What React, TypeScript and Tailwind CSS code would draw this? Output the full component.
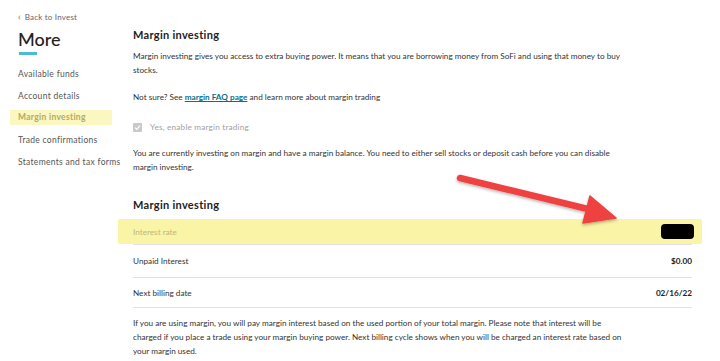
import React from "react"

const menu = ["Available funds", "Account details", "Margin investing", "Trade confirmations", "Statements and tax forms"]

const App: React.FC = () => {
    return (
        <div className="relative w-[720px] h-[361px] overflow-hidden bg-white text-[#333] font-['Lato','Liberation_Sans',sans-serif]">
            <div className="flex">
                {/* sidebar */}
                <div className="w-[125px] shrink-0 pl-[18px] pt-[11px]">
                    <div className="flex items-center gap-[4px] text-[8px] leading-[12px] text-[#666] tracking-[0.2px]">
                        <span className="text-[9px]">‹</span>
                        <span>Back to Invest</span>
                    </div>
                    <div className="mt-[8px] text-[18px] leading-[16px] font-medium text-[#222]">More</div>
                    <div className="mt-[5px] ml-[1px] w-[18px] h-[3px] bg-[#4dbcd0]"></div>
                    <div className="mt-[8px] flex flex-col">
                        {menu.map((item) => (
                            item === "Margin investing" ? (
                                <div key={item} className="-ml-[8px] w-[102px] h-[15px] pl-[8px] mt-[3px] mb-[4px] flex items-center bg-[#fbf7c0] text-[8.5px] tracking-[0.3px] font-bold text-[#b3ab62]">
                                    {item}
                                </div>
                            ) : (
                                <div key={item} className="h-[22px] flex items-center text-[8.5px] tracking-[0.3px] text-[#555]">
                                    {item}
                                </div>
                            )
                        ))}
                    </div>
                </div>

                {/* main */}
                <div className="w-[567px] pl-[8px] pt-[28px] text-[8.2px] leading-[14px]">
                    <div className="text-[11px] leading-[14px] font-bold tracking-[0.3px] text-[#222]">Margin investing</div>
                    <p className="mt-[7px] max-w-[490px]">
                        Margin investing gives you access to extra buying power. It means that you are borrowing money from SoFi and using that money to buy stocks.
                    </p>
                    <p className="mt-[13px]">
                        Not sure? See <span className="font-bold text-[#0a6f8a] underline">margin FAQ page</span> and learn more about margin trading
                    </p>
                    <div className="mt-[16px] flex items-center gap-[8px] text-[#a0a0a0]">
                        <div className="w-[9px] h-[9px] rounded-[1px] bg-[#c9c9c9] flex items-center justify-center">
                            <svg width="7" height="7" viewBox="0 0 10 10">
                                <path d="M1.5 5.2 L4 7.6 L8.5 2.4" fill="none" stroke="white" strokeWidth="1.8" />
                            </svg>
                        </div>
                        <span className="tracking-[0.2px]">Yes, enable margin trading</span>
                    </div>
                    <p className="mt-[12px] max-w-[490px]">
                        You are currently investing on margin and have a margin balance. You need to either sell stocks or deposit cash before you can disable margin investing.
                    </p>
                    <div className="mt-[24px] text-[11px] leading-[14px] font-bold tracking-[0.3px] text-[#222]">Margin investing</div>

                    <div className="mt-[7px] border-b border-[#e2e2e2]">
                        <div className="-ml-[15px] -mr-[10px] pl-[15px] pr-[8px] h-[25px] rounded-[2px] bg-[#f9f4a6] flex items-center justify-between">
                            <span className="text-[#bdb680]">Interest rate</span>
                            <div className="w-[33px] h-[15px] rounded-[4px] bg-black blur-[0.6px]"></div>
                        </div>
                    </div>
                    <div className="h-[33px] border-b border-[#e2e2e2] flex items-center justify-between">
                        <span>Unpaid Interest</span>
                        <span className="font-bold text-[#222]">$0.00</span>
                    </div>
                    <div className="h-[30px] border-b border-[#e2e2e2] flex items-center justify-between">
                        <span>Next billing date</span>
                        <span className="font-bold text-[#222]">02/16/22</span>
                    </div>
                    <p className="mt-[8px] max-w-[490px]">
                        If you are using margin, you will pay margin interest based on the used portion of your total margin. Please note that interest will be charged if you place a trade using your margin buying power. Next billing cycle shows when you will be charged an interest rate based on your margin used.
                    </p>
                </div>
            </div>

            {/* annotation arrow */}
            <svg className="absolute left-0 top-0 pointer-events-none" width="720" height="361" viewBox="0 0 720 361">
                <defs>
                    <filter id="sh" x="-20%" y="-20%" width="140%" height="140%">
                        <feDropShadow dx="0" dy="1.5" stdDeviation="1.5" floodColor="#000" floodOpacity="0.3" />
                    </filter>
                </defs>
                <g filter="url(#sh)">
                    <line x1="460" y1="178" x2="592" y2="210" stroke="#ef4340" strokeWidth="6.5" strokeLinecap="round" />
                    <polygon points="590,196 616,218 583,223" fill="#ef4340" stroke="#ef4340" strokeWidth="1.5" strokeLinejoin="round" />
                </g>
            </svg>
        </div>
    )
}

export default App
